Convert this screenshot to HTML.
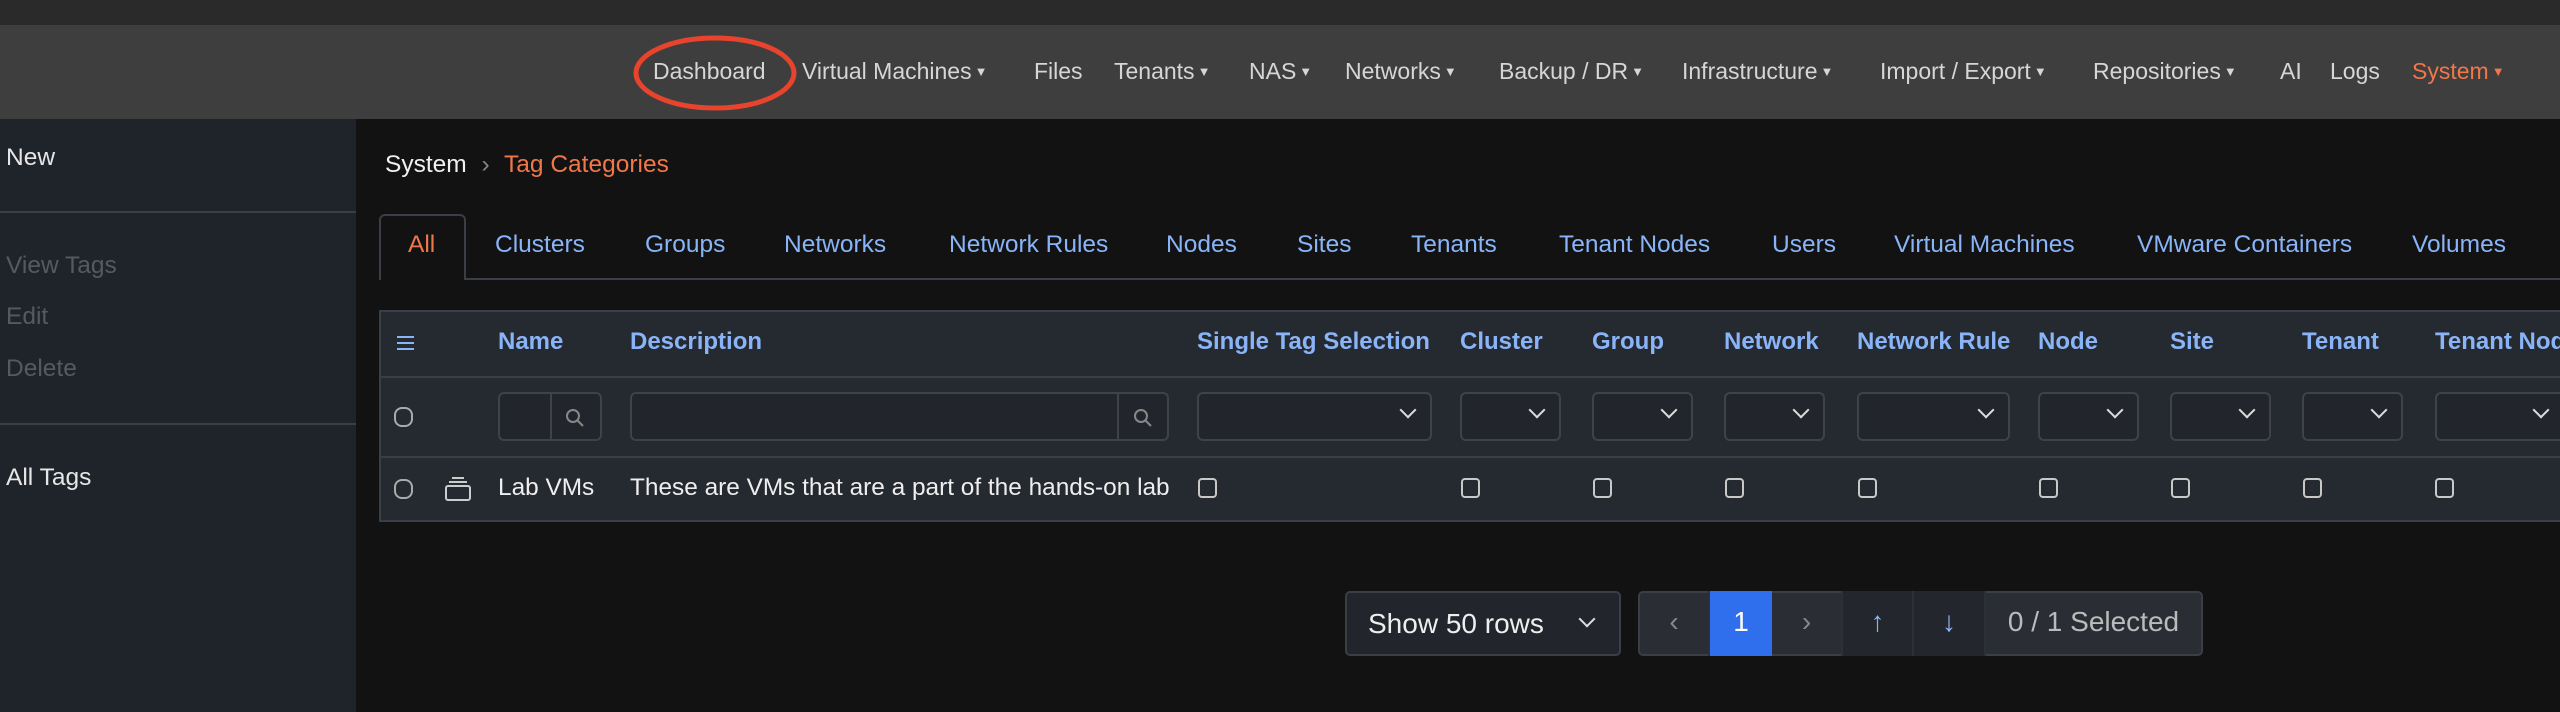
<!DOCTYPE html>
<html><head><meta charset="utf-8"><style>
*{box-sizing:border-box;margin:0;padding:0}
body{width:2560px;height:712px;background:#121212;font-family:"Liberation Sans",sans-serif;position:relative;overflow:hidden;color:#ddd}
.a{position:absolute;white-space:nowrap}
.top{left:0;top:0;width:2560px;height:25px;background:#2a2a2a}
.nav{left:0;top:25px;width:2560px;height:94px;background:#3e3e3e}
.nv{top:58px;font-size:23px;color:#d6d6d6}
.car{font-size:13px;vertical-align:3px;margin-left:3px}
.side{left:0;top:119px;width:356px;height:593px;background:#1f242b}
.si{left:6px;font-size:24.5px}
.hr{left:0;width:356px;height:2px;background:#3a3f46}
.tab{top:231px;font-size:24.5px;color:#8ab4f8}
.tbl{left:379px;top:310px;width:2200px;height:212px;background:#252930;border:2px solid #3a3e45}
.th{top:328px;font-size:24px;font-weight:bold;color:#8ab4f8}
.in{top:392px;height:49px;border:2px solid #3e434a;border-radius:6px;background:#22262c}
.chev{position:absolute;right:16px;top:10px;width:12px;height:12px;border-right:2px solid #ddd;border-bottom:2px solid #ddd;transform:rotate(45deg)}
.cb{width:19px;height:20px;border:2px solid #c8c8c8;border-radius:4px;top:478px}
.rb{width:19px;height:20px;border:2px solid #aaa;border-radius:8px}
.pc{top:591px;height:65px;border-right:2px solid #2c3037;font-size:28px;color:#8ab4f8;text-align:center;line-height:62px}
</style></head><body>
<div class="a top"></div>
<div class="a nav"></div>
<div class="a nv" style="left:653px">Dashboard</div>
<div class="a nv" style="left:802px">Virtual Machines<span class="car">▼</span></div>
<div class="a nv" style="left:1034px">Files</div>
<div class="a nv" style="left:1114px">Tenants<span class="car">▼</span></div>
<div class="a nv" style="left:1249px">NAS<span class="car">▼</span></div>
<div class="a nv" style="left:1345px">Networks<span class="car">▼</span></div>
<div class="a nv" style="left:1499px">Backup / DR<span class="car">▼</span></div>
<div class="a nv" style="left:1682px">Infrastructure<span class="car">▼</span></div>
<div class="a nv" style="left:1880px">Import / Export<span class="car">▼</span></div>
<div class="a nv" style="left:2093px">Repositories<span class="car">▼</span></div>
<div class="a nv" style="left:2280px">AI</div>
<div class="a nv" style="left:2330px">Logs</div>
<div class="a nv" style="left:2412px;color:#f0774a">System<span class="car">▼</span></div>
<svg class="a" style="left:630px;top:32px" width="170" height="82"><ellipse cx="85" cy="41" rx="79" ry="35" fill="none" stroke="#e8432c" stroke-width="5"/></svg>

<div class="a side"></div>
<div class="a si" style="top:144px;color:#e6e6e6">New</div>
<div class="a hr" style="top:211px"></div>
<div class="a si" style="top:252px;color:#555a61">View Tags</div>
<div class="a si" style="top:303px;color:#555a61">Edit</div>
<div class="a si" style="top:355px;color:#555a61">Delete</div>
<div class="a hr" style="top:423px"></div>
<div class="a si" style="top:464px;color:#e6e6e6">All Tags</div>

<div class="a" style="left:385px;top:151px;font-size:24.5px;color:#f0f0f0">System <span style="color:#888;margin:0 8px">›</span> <span style="color:#f0774a">Tag Categories</span></div>

<div class="a" style="left:379px;top:278px;width:2181px;height:2px;background:#3a3e45"></div>
<div class="a" style="left:379px;top:214px;width:87px;height:66px;border:2px solid #3a3e45;border-bottom:none;border-radius:6px 6px 0 0;background:#121212"></div>
<div class="a tab" style="left:408px;color:#f0774a">All</div>
<div class="a tab" style="left:495px">Clusters</div>
<div class="a tab" style="left:645px">Groups</div>
<div class="a tab" style="left:784px">Networks</div>
<div class="a tab" style="left:949px">Network Rules</div>
<div class="a tab" style="left:1166px">Nodes</div>
<div class="a tab" style="left:1297px">Sites</div>
<div class="a tab" style="left:1411px">Tenants</div>
<div class="a tab" style="left:1559px">Tenant Nodes</div>
<div class="a tab" style="left:1772px">Users</div>
<div class="a tab" style="left:1894px">Virtual Machines</div>
<div class="a tab" style="left:2137px">VMware Containers</div>
<div class="a tab" style="left:2412px">Volumes</div>

<div class="a tbl"></div>
<div class="a" style="left:379px;top:376px;width:2181px;height:2px;background:#3a3e45"></div>
<div class="a" style="left:379px;top:456px;width:2181px;height:2px;background:#3a3e45"></div>
<div class="a" style="left:397px;top:336px;width:17px;height:2px;background:#8ab4f8;box-shadow:0 6px 0 #8ab4f8,0 12px 0 #8ab4f8"></div>
<div class="a th" style="left:498px">Name</div>
<div class="a th" style="left:630px">Description</div>
<div class="a th" style="left:1197px">Single Tag Selection</div>
<div class="a th" style="left:1460px">Cluster</div>
<div class="a th" style="left:1592px">Group</div>
<div class="a th" style="left:1724px">Network</div>
<div class="a th" style="left:1857px">Network Rule</div>
<div class="a th" style="left:2038px">Node</div>
<div class="a th" style="left:2170px">Site</div>
<div class="a th" style="left:2302px">Tenant</div>
<div class="a th" style="left:2435px">Tenant Nodes</div>

<div class="a rb" style="left:394px;top:407px"></div>
<div class="a in" style="left:498px;width:104px"><div style="position:absolute;left:50px;top:0;bottom:0;width:2px;background:#3e434a"></div><svg style="position:absolute;left:64px;top:13px" width="22" height="22"><circle cx="9" cy="9" r="6" fill="none" stroke="#888" stroke-width="2"/><path d="M13 13l6 6" stroke="#888" stroke-width="2"/></svg></div>
<div class="a in" style="left:630px;width:539px"><div style="position:absolute;left:485px;top:0;bottom:0;width:2px;background:#3e434a"></div><svg style="position:absolute;left:500px;top:13px" width="22" height="22"><circle cx="9" cy="9" r="6" fill="none" stroke="#888" stroke-width="2"/><path d="M13 13l6 6" stroke="#888" stroke-width="2"/></svg></div>
<div class="a in" style="left:1197px;width:235px"><div class="chev"></div></div>
<div class="a in" style="left:1460px;width:101px"><div class="chev"></div></div>
<div class="a in" style="left:1592px;width:101px"><div class="chev"></div></div>
<div class="a in" style="left:1724px;width:101px"><div class="chev"></div></div>
<div class="a in" style="left:1857px;width:153px"><div class="chev"></div></div>
<div class="a in" style="left:2038px;width:101px"><div class="chev"></div></div>
<div class="a in" style="left:2170px;width:101px"><div class="chev"></div></div>
<div class="a in" style="left:2302px;width:101px"><div class="chev"></div></div>
<div class="a in" style="left:2435px;width:150px"><div class="chev" style="right:36px"></div></div>

<div class="a rb" style="left:394px;top:479px"></div>
<svg class="a" style="left:444px;top:476px" width="28" height="26"><path d="M8 2h12M5 6h18" stroke="#ccc" stroke-width="2"/><rect x="2" y="10" width="24" height="14" rx="2" fill="none" stroke="#ccc" stroke-width="2"/></svg>
<div class="a" style="left:498px;top:474px;font-size:24.4px;color:#eee">Lab VMs</div>
<div class="a" style="left:630px;top:474px;font-size:24.4px;color:#eee">These are VMs that are a part of the hands-on lab</div>
<div class="a cb" style="left:1198px"></div>
<div class="a cb" style="left:1461px"></div>
<div class="a cb" style="left:1593px"></div>
<div class="a cb" style="left:1725px"></div>
<div class="a cb" style="left:1858px"></div>
<div class="a cb" style="left:2039px"></div>
<div class="a cb" style="left:2171px"></div>
<div class="a cb" style="left:2303px"></div>
<div class="a cb" style="left:2435px"></div>

<div class="a" style="left:1345px;top:591px;width:276px;height:65px;border:2px solid #3a3e45;border-radius:5px;background:#22262c;font-size:28px;color:#eee;line-height:61px;padding-left:21px">Show 50 rows<div class="chev" style="right:26px;top:20px"></div></div>
<div class="a" style="left:1638px;top:591px;width:565px;height:65px;border:2px solid #3a3e45;border-radius:5px;background:#2a2e34;overflow:hidden"></div>
<div class="a pc" style="left:1640px;width:70px;color:#888">‹</div>
<div class="a pc" style="left:1710px;width:62px;background:#2f6fed;color:#fff;border:none">1</div>
<div class="a pc" style="left:1772px;width:71px;color:#888">›</div>
<div class="a pc" style="left:1843px;width:71px;background:#23272d">↑</div>
<div class="a pc" style="left:1914px;width:72px;background:#23272d">↓</div>
<div class="a pc" style="left:1986px;width:215px;border:none;color:#bbb">0 / 1 Selected</div>
</body></html>
